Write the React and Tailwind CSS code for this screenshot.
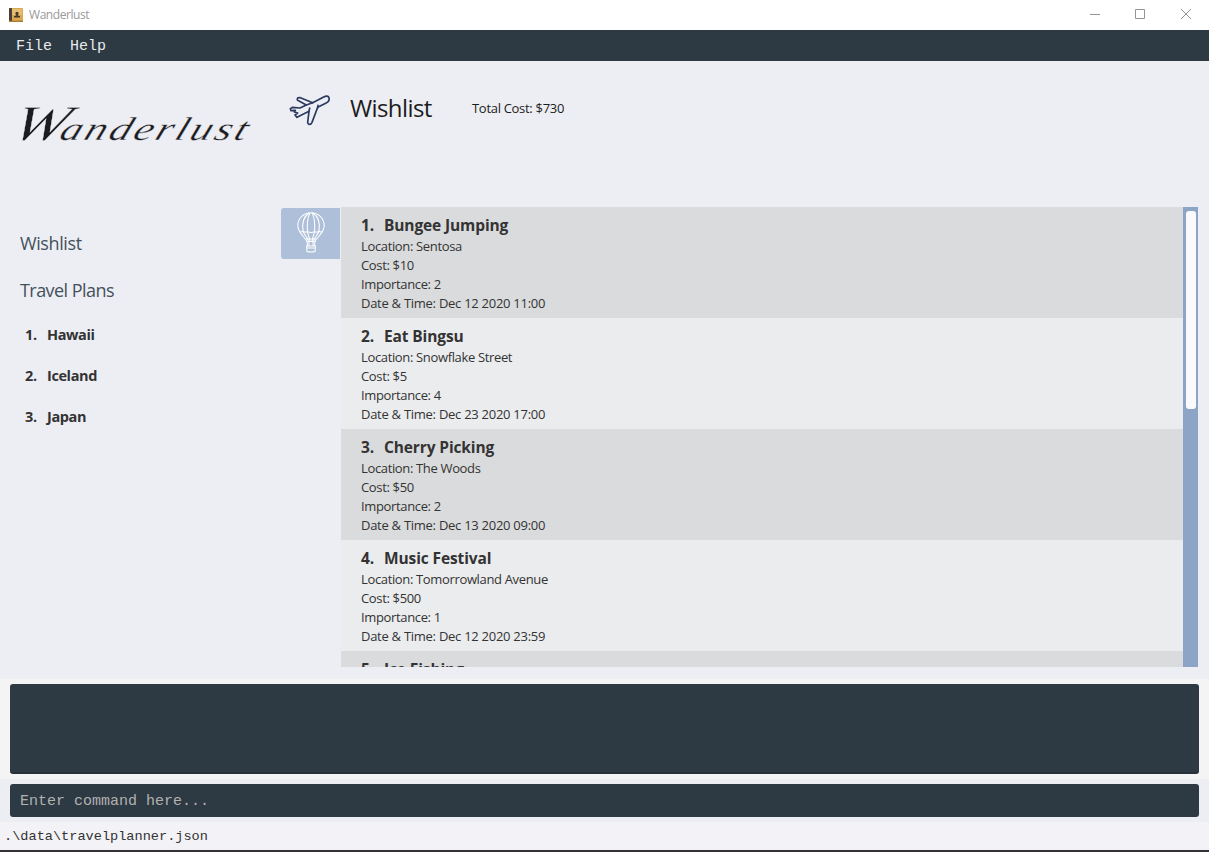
const activities = [
  { name: 'Bungee Jumping', location: 'Sentosa', cost: 10, importance: 2, date: 'Dec 12 2020 11:00' },
  { name: 'Eat Bingsu', location: 'Snowflake Street', cost: 5, importance: 4, date: 'Dec 23 2020 17:00' },
  { name: 'Cherry Picking', location: 'The Woods', cost: 50, importance: 2, date: 'Dec 13 2020 09:00' },
  { name: 'Music Festival', location: 'Tomorrowland Avenue', cost: 500, importance: 1, date: 'Dec 12 2020 23:59' },
];
const plans = ['Hawaii', 'Iceland', 'Japan'];

function AppIcon() {
  return (
    <svg width="14" height="14" viewBox="0 0 14 14">
      <rect width="14" height="14" rx="1" fill="#d9a851" />
      <rect x="3" y="1" width="10" height="6" fill="#e5bd70" />
      <rect width="3" height="14" rx="0.5" fill="#4b3d38" />
      <rect y="12.6" width="14" height="1.4" fill="#a77b38" />
      <circle cx="8" cy="5.400" r="1.6" fill="#44382e" />
      <path d="M7.2 6h1.6v1.5l2.200 .6v1.400H5V8.100l2.200-.6z" fill="#44382e" />
    </svg>
  );
}

function Plane() {
  return (
    <svg width="42" height="32" viewBox="42 42 126 96" fill="none" stroke="#2c3960" strokeWidth="5" strokeLinejoin="round" strokeLinecap="round">
      <path d="M113 68 L146 51 Q158 45 162 53 Q165 63 152 70 L128 82 L111 127 Q108 134 102 133 Q98 132 98 127 L102 94 L66 112 L60 105 L68 99 L58 96 L61 91 L48 92 L46 86 L53 82 L75 84 L94 75 L68 61 Q65 58 68 54 Q71 52 76 53 Z" />
      <path d="M94 75 L113 68 M102 94 L104 84 M128 83 L129 76" />
    </svg>
  );
}

function Balloon() {
  return (
    <svg width="28" height="41" viewBox="0 0 28 41" fill="none" stroke="#fff" strokeWidth="1.05">
      <path d="M10 29.500 C8 25 .8 21 .8 13.500 C.8 6 7 .8 14 .8 S27.200 6 27.200 13.500 C27.200 21 20 25 18 29.500 Z" />
      <path d="M12 1 C6 5 5 12 6 19 C7 23 11 26 11.500 29 M16 1 C22 5 23 12 22 19 C21 23 17 26 16.500 29 M13 1 C10 6 10 13 10.500 20 L13 29 M15 1 C18 6 18 13 17.500 20 L15 29" />
      <path d="M2 19 Q4 21 6 19 Q8 21 10.500 19.500 Q14 21.500 17.500 19.500 Q20 21 22 19 Q24 21 26 19 M9 27 H19 M10 29.500 L10.500 34 M18 29.500 L17.500 34 M9.500 34 H18.500 L18 39.500 Q14 40.500 10 39.500 Z M12 30 V34 M16 30 V34 M10 36 H18" />
    </svg>
  );
}

export default function App() {
  return (
    <div className="flex h-[852px] w-[1209px] flex-col overflow-hidden bg-[#edeef4] font-['Open_Sans','Noto_Sans',sans-serif] text-[#333333]">
      <header className="flex h-[30px] shrink-0 items-center bg-white pl-[9px] pb-px text-[#999999]">
        <AppIcon />
        <span className="ml-[6px] text-[12px] tracking-[-0.45px]">Wanderlust</span>
        <svg className="ml-auto mr-[17px]" width="103" height="12" viewBox="0 0 103 12" fill="none" stroke="#949494">
          <path d="M1 5.500h10M46.500 .5h9v9h-9zM92 0l10 10M102 0L92 10" />
        </svg>
      </header>
      <nav className="flex h-[31px] shrink-0 items-center gap-[18px] bg-[#2d3943] pt-1 pl-4 font-['Liberation_Mono',monospace] text-[15px] text-[#e9ebec]">
        <span>File</span>
        <span>Help</span>
      </nav>
      <main className="flex h-[618px] shrink-0">
        <aside className="w-[281px] shrink-0 pl-5">
          <div className="h-[122px] pt-[34px]">
            <h1 className="-ml-[18px] w-max origin-bottom-left scale-x-[1.31] -skew-x-[16deg] whitespace-nowrap font-['Liberation_Serif',serif] text-[33px] leading-[56px] tracking-[2.2px] text-[#1c1c20] italic [-webkit-text-stroke:0.3px_#edeef4]">
              <span className="text-[50px] tracking-[-4px]">W</span>anderlust
            </h1>
          </div>
          <div className="pt-[47px] text-[18px] leading-[26px] tracking-[-0.55px] text-[#44515c]">
            <p className="tracking-[-0.4px]">Wishlist</p>
            <p className="mt-[21px]">Travel Plans</p>
          </div>
          <ol className="mt-[22px] flex flex-col gap-[21px] pl-[5px] text-[14.5px] leading-5 font-bold tracking-[-0.4px]">
            {plans.map((p, i) => (
              <li key={p} className="flex">
                <span className="w-[22px]">{i + 1}.</span>
                <span>{p}</span>
              </li>
            ))}
          </ol>
        </aside>
        <section className="flex min-w-0 flex-1 flex-col">
          <div className="flex h-[146px] shrink-0 items-start pl-2 text-[#1c1c20]">
            <div className="mt-[33px]"><Plane /></div>
            <h2 className="mt-[30px] ml-[19px] w-[122px] text-[24px] leading-[34px] tracking-[-0.6px]">Wishlist</h2>
            <p className="mt-[37px] text-[13px] leading-5 tracking-[-0.3px]">Total Cost: $730</p>
          </div>
          <div className="flex h-[460px]">
            <div className="mt-px mr-px flex h-[51px] w-[59px] justify-center rounded-l-[3px] bg-[#adbfd9] pt-1"><Balloon /></div>
            <ul className="w-[842px] overflow-hidden">
              {activities.map((a, i) => (
                <li key={a.name} className="h-[111px] pt-[7px] pl-5 text-[13px] leading-[19px] tracking-[-0.35px] odd:bg-[#dadbdc] even:bg-[#ebecee]">
                  <h3 className="flex h-[23px] text-[15.5px] leading-[22px] font-bold tracking-[-0.12px]">
                    <span className="w-[23px]">{i + 1}.</span>
                    <span>{a.name}</span>
                  </h3>
                  <p>Location: {a.location}</p>
                  <p>Cost: ${a.cost}</p>
                  <p>Importance: {a.importance}</p>
                  <p className="tracking-[-0.27px]">Date &amp; Time: {a.date}</p>
                </li>
              ))}
              <li className="h-4 overflow-hidden bg-[#dadbdc] pt-[7px] pl-5">
                <h3 className="flex text-[15.5px] leading-[22px] font-bold tracking-[-0.12px]">
                  <span className="w-[23px]">5.</span>
                  <span>Ice Fishing</span>
                </h3>
              </li>
            </ul>
            <div className="w-[15px] bg-[#8ca4c5] pt-1 pl-[3px]">
              <div className="h-[198px] w-[10px] rounded-[3px] bg-[#fafafc]" />
            </div>
          </div>
        </section>
      </main>
      <div className="h-[100px] shrink-0 bg-[#f4f4f4] px-[10px] py-[5px]">
        <div className="h-[90px] rounded-[3px] border-b-2 border-[#25313b] bg-[#2d3943]" />
      </div>
      <footer className="font-['Liberation_Mono',monospace]">
        <div className="h-[43px] px-[10px] py-[5px]">
          <div className="h-[33px] rounded-[3px] bg-[#2d3943] pl-[10px] text-[15px] leading-[36px] text-[#b1b1b0]">Enter command here...</div>
        </div>
        <div className="h-[28px] bg-[#f2f2f7] pl-1 text-[13.6px] leading-[30px]">.\data\travelplanner.json</div>
        <div className="h-[2px] bg-[#343036]" />
      </footer>
    </div>
  );
}
